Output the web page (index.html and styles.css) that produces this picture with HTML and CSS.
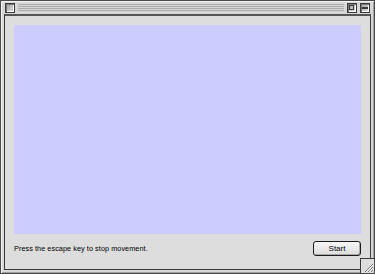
FILE: index.html
```html
<!DOCTYPE html>
<html>
<head>
<meta charset="utf-8">
<link rel="stylesheet" href="styles.css">
</head>
<body>
<div class="window">
  <div class="titlebar">
    <div class="close-box"></div>
    <div class="stripes"></div>
    <div class="zoom-box"><span class="zoom-inner"></span></div>
    <div class="collapse-box"><span class="collapse-line"></span></div>
  </div>
  <div class="content">
    <div class="canvas"></div>
    <div class="footer">
      <span class="hint">Press the escape key to stop movement.</span>
      <button class="start">Start</button>
    </div>
  </div>
  <div class="grip">
    <svg width="13" height="13" viewBox="0 0 13 13">
      <path d="M4 12 L12 4 M7 12 L12 7 M10 12 L12 10" stroke="#777" stroke-width="1" fill="none"/>
      <path d="M5 12 L12 5 M8 12 L12 8" stroke="#fff" stroke-width="1" fill="none"/>
    </svg>
  </div>
</div>
</body>
</html>
```

FILE: styles.css
```css
* { box-sizing: border-box; }
html, body { margin: 0; padding: 0; background: #fff; }
.window {
  position: relative;
  width: 375px;
  height: 274px;
  border: 1px solid #4a4a4a;
  background: #d8d8d8;
  box-shadow: inset 1px 1px 0 #f4f4f4, inset -1px -1px 0 #a0a0a0;
  display: flex;
  flex-direction: column;
  padding: 0 3px 3px 3px;
}
.titlebar {
  height: 13px;
  display: flex;
  align-items: center;
  gap: 3px;
  padding: 0 0 0 1px;
}
.stripes {
  flex: 1;
  height: 9px;
  background: repeating-linear-gradient(to bottom, #d6d6d6 0, #d6d6d6 1px, #ababab 1px, #ababab 2px);
}
.close-box, .zoom-box, .collapse-box {
  width: 10px;
  height: 10px;
  border: 1px solid #3a3a3a;
  background: linear-gradient(135deg, #9a9a9a, #e8e8e8);
  box-shadow: inset 1px 1px 0 #777, inset -1px -1px 0 #fff;
  position: relative;
  flex: none;
}
.collapse-box { margin-right: 1px; }
.zoom-inner {
  position: absolute;
  left: 1px; top: 1px;
  width: 5px; height: 5px;
  border: 1px solid #3a3a3a;
}
.collapse-line {
  position: absolute;
  left: 1px; right: 1px; top: 3px;
  height: 2px;
  border-top: 1px solid #3a3a3a;
  border-bottom: 1px solid #3a3a3a;
}
.content {
  flex: 1;
  border: 1px solid #3a3a3a;
  border-top: 2px solid #555;
  background: #dddddd;
  padding: 9px 9px 0 9px;
  display: flex;
  flex-direction: column;
}
.canvas {
  height: 209px;
  background: #ccccff;
}
.footer {
  display: flex;
  align-items: center;
  justify-content: space-between;
  padding: 7px 0 0 0;
}
.hint {
  font-family: "Liberation Sans", Arial, sans-serif;
  font-size: 7.3px;
  color: #000;
  letter-spacing: 0.05px;
}
.start {
  width: 48px;
  height: 15px;
  border: 1px solid #1a1a1a;
  border-radius: 3px;
  background: linear-gradient(#f6f6f6, #dcdcdc);
  box-shadow: inset -1px -1px 0 #aaa;
  font-family: "Liberation Sans", Arial, sans-serif;
  font-size: 8px;
  color: #000;
  padding: 0;
}
.grip {
  position: absolute;
  right: 0;
  bottom: 0;
  width: 14px;
  height: 15px;
  background: #dddddd;
  border-left: 1px solid #3a3a3a;
  border-top: 1px solid #3a3a3a;
  display: flex;
  align-items: flex-end;
  justify-content: flex-end;
}
```
